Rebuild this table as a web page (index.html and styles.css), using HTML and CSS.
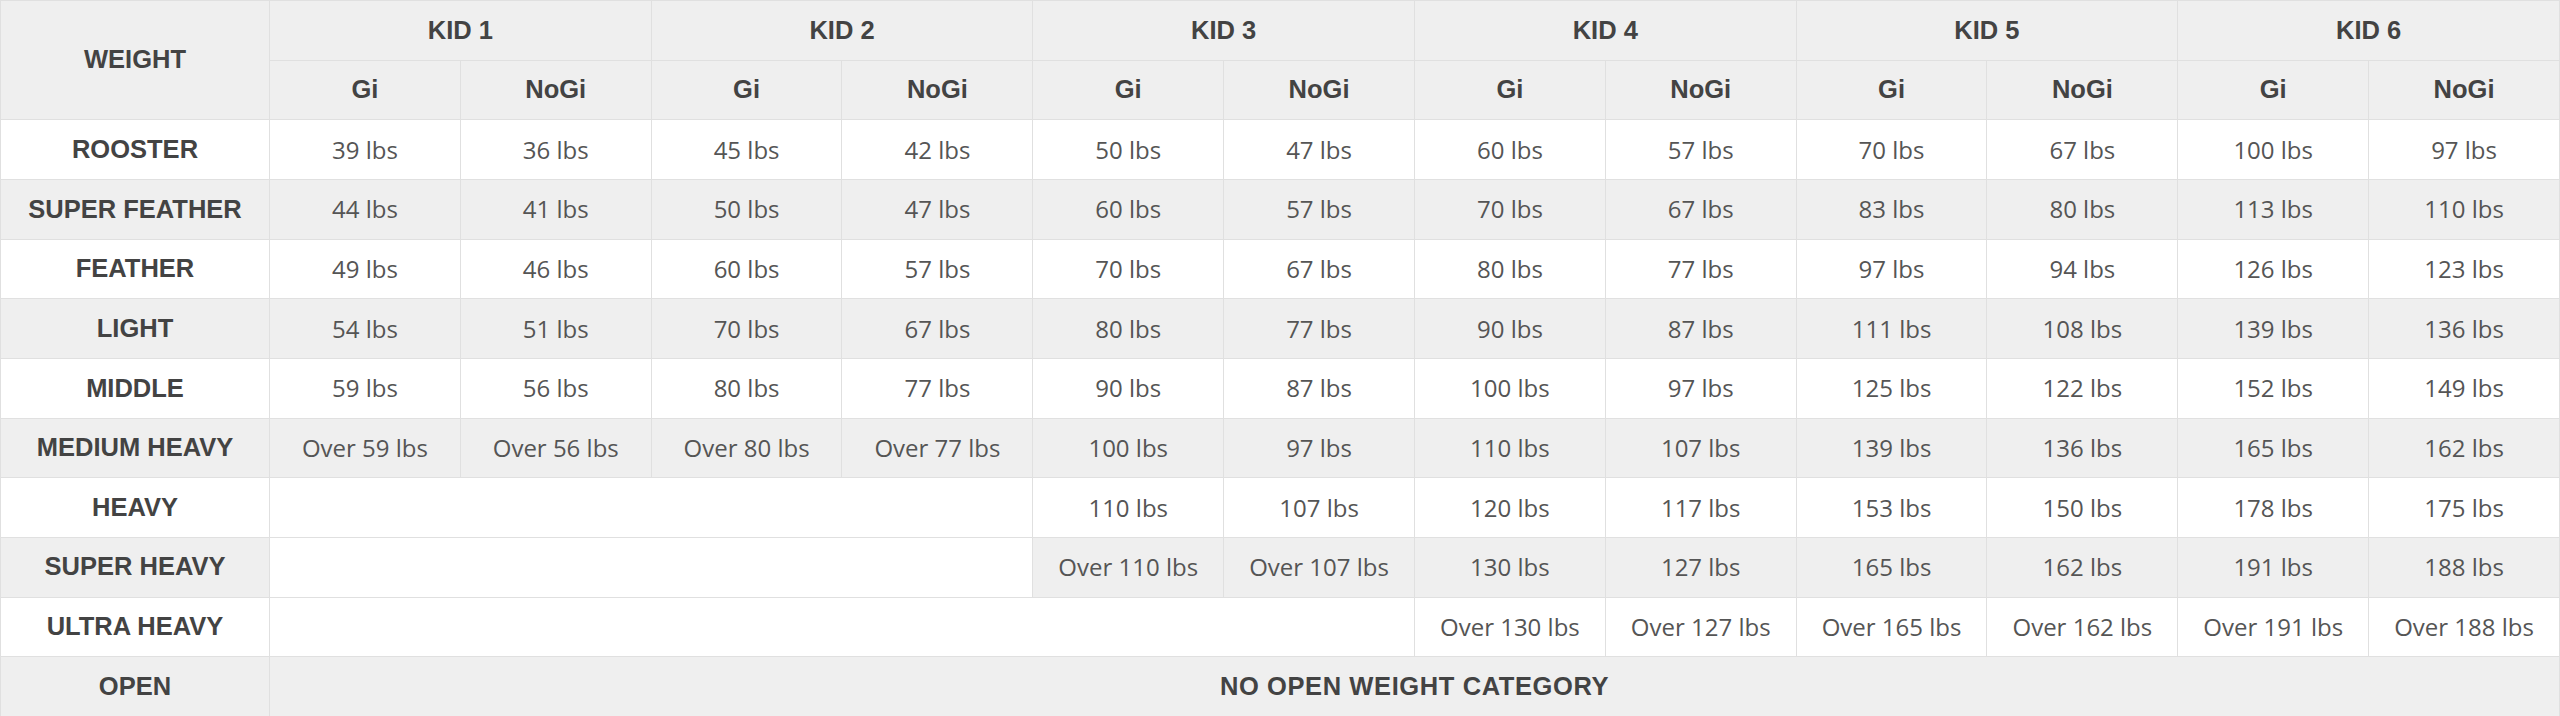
FILE: index.html
```html
<!DOCTYPE html>
<html lang="en">
<head>
<meta charset="utf-8">
<title>Kids Weight Divisions</title>
<link rel="stylesheet" href="styles.css">
</head>
<body>
<table class="weights">
  <colgroup>
    <col class="col-label">
    <col><col><col><col><col><col><col><col><col><col><col><col>
  </colgroup>
  <thead>
    <tr class="grey">
      <th rowspan="2" class="label">WEIGHT</th>
      <th colspan="2">KID 1</th>
      <th colspan="2">KID 2</th>
      <th colspan="2">KID 3</th>
      <th colspan="2">KID 4</th>
      <th colspan="2">KID 5</th>
      <th colspan="2">KID 6</th>
    </tr>
    <tr class="grey">
      <th>Gi</th><th>NoGi</th>
      <th>Gi</th><th>NoGi</th>
      <th>Gi</th><th>NoGi</th>
      <th>Gi</th><th>NoGi</th>
      <th>Gi</th><th>NoGi</th>
      <th>Gi</th><th>NoGi</th>
    </tr>
  </thead>
  <tbody>
    <tr class="white">
      <th class="label">ROOSTER</th>
      <td>39 lbs</td><td>36 lbs</td><td>45 lbs</td><td>42 lbs</td><td>50 lbs</td><td>47 lbs</td>
      <td>60 lbs</td><td>57 lbs</td><td>70 lbs</td><td>67 lbs</td><td>100 lbs</td><td>97 lbs</td>
    </tr>
    <tr class="grey">
      <th class="label">SUPER FEATHER</th>
      <td>44 lbs</td><td>41 lbs</td><td>50 lbs</td><td>47 lbs</td><td>60 lbs</td><td>57 lbs</td>
      <td>70 lbs</td><td>67 lbs</td><td>83 lbs</td><td>80 lbs</td><td>113 lbs</td><td>110 lbs</td>
    </tr>
    <tr class="white">
      <th class="label">FEATHER</th>
      <td>49 lbs</td><td>46 lbs</td><td>60 lbs</td><td>57 lbs</td><td>70 lbs</td><td>67 lbs</td>
      <td>80 lbs</td><td>77 lbs</td><td>97 lbs</td><td>94 lbs</td><td>126 lbs</td><td>123 lbs</td>
    </tr>
    <tr class="grey">
      <th class="label">LIGHT</th>
      <td>54 lbs</td><td>51 lbs</td><td>70 lbs</td><td>67 lbs</td><td>80 lbs</td><td>77 lbs</td>
      <td>90 lbs</td><td>87 lbs</td><td>111 lbs</td><td>108 lbs</td><td>139 lbs</td><td>136 lbs</td>
    </tr>
    <tr class="white">
      <th class="label">MIDDLE</th>
      <td>59 lbs</td><td>56 lbs</td><td>80 lbs</td><td>77 lbs</td><td>90 lbs</td><td>87 lbs</td>
      <td>100 lbs</td><td>97 lbs</td><td>125 lbs</td><td>122 lbs</td><td>152 lbs</td><td>149 lbs</td>
    </tr>
    <tr class="grey">
      <th class="label">MEDIUM HEAVY</th>
      <td>Over 59 lbs</td><td>Over 56 lbs</td><td>Over 80 lbs</td><td>Over 77 lbs</td><td>100 lbs</td><td>97 lbs</td>
      <td>110 lbs</td><td>107 lbs</td><td>139 lbs</td><td>136 lbs</td><td>165 lbs</td><td>162 lbs</td>
    </tr>
    <tr class="white">
      <th class="label">HEAVY</th>
      <td colspan="4" class="empty"></td><td>110 lbs</td><td>107 lbs</td>
      <td>120 lbs</td><td>117 lbs</td><td>153 lbs</td><td>150 lbs</td><td>178 lbs</td><td>175 lbs</td>
    </tr>
    <tr class="grey">
      <th class="label">SUPER HEAVY</th>
      <td colspan="4" class="empty"></td><td>Over 110 lbs</td><td>Over 107 lbs</td>
      <td>130 lbs</td><td>127 lbs</td><td>165 lbs</td><td>162 lbs</td><td>191 lbs</td><td>188 lbs</td>
    </tr>
    <tr class="white">
      <th class="label">ULTRA HEAVY</th>
      <td colspan="6" class="empty"></td>
      <td>Over 130 lbs</td><td>Over 127 lbs</td><td>Over 165 lbs</td><td>Over 162 lbs</td><td>Over 191 lbs</td><td>Over 188 lbs</td>
    </tr>
    <tr class="grey">
      <th class="label">OPEN</th>
      <td colspan="12" class="note">NO OPEN WEIGHT CATEGORY</td>
    </tr>
  </tbody>
</table>
</body>
</html>
```

FILE: styles.css
```css
html, body {
  margin: 0;
  padding: 0;
  background: #ffffff;
}

.weights {
  width: 2560px;
  table-layout: fixed;
  border-collapse: collapse;
  border-spacing: 0;
}

.col-label {
  width: 269px;
}

.weights tr {
  height: 59.67px;
}

.weights th,
.weights td {
  border: 1px solid #e0e0e0;
  text-align: center;
  vertical-align: middle;
  padding: 0;
  line-height: 1;
}

.weights th {
  font-family: "Liberation Sans", Arial, sans-serif;
  font-weight: bold;
  font-size: 25.5px;
  color: #434343;
}

.weights td {
  font-family: "Open Sans", "Liberation Sans", sans-serif;
  font-weight: normal;
  font-size: 24px;
  color: #555555;
}

.weights tr.grey th,
.weights tr.grey td {
  background: #efefef;
}

.weights tr.white th,
.weights tr.white td {
  background: #ffffff;
}

.weights tr.grey td.empty,
.weights td.empty {
  background: #ffffff;
}

.weights tr.grey td.note {
  font-family: "Liberation Sans", Arial, sans-serif;
  font-weight: bold;
  font-size: 25.5px;
  letter-spacing: 0.6px;
  color: #434343;
}
```
